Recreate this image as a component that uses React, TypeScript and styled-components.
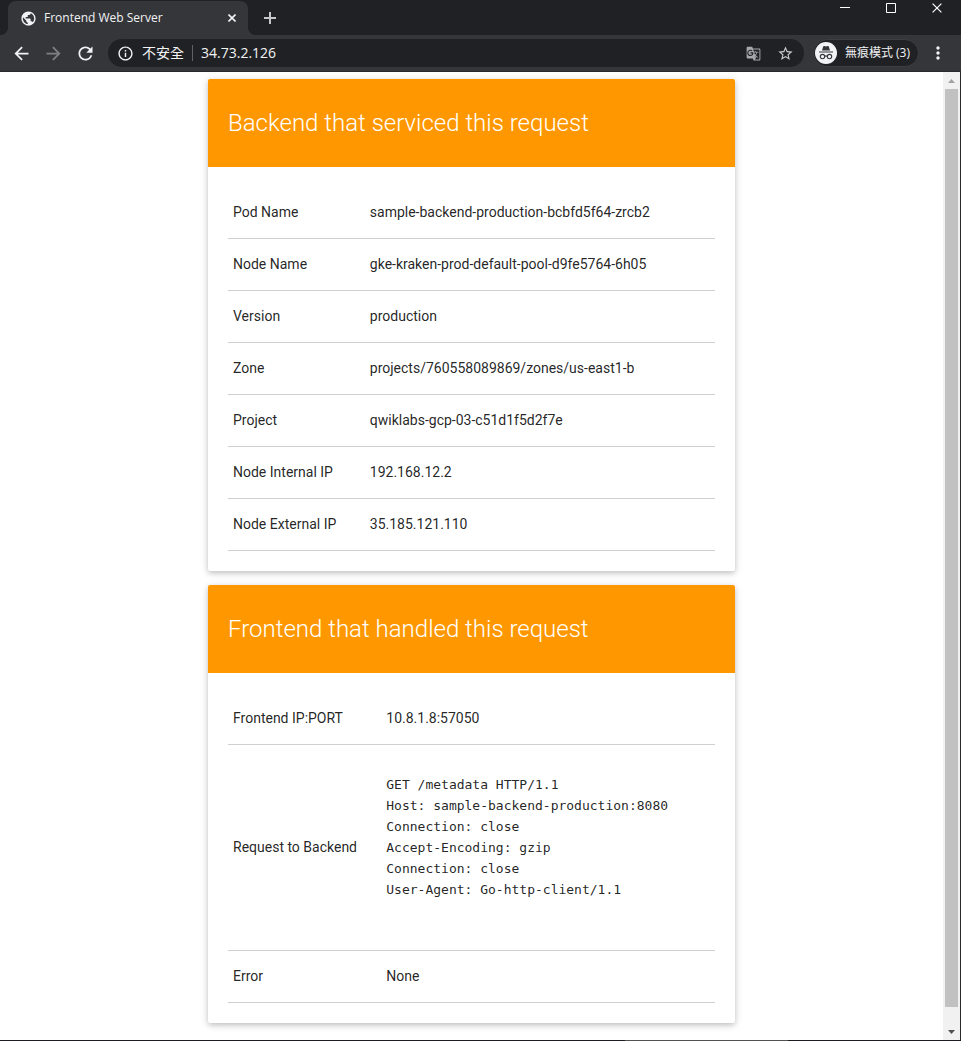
import React from "react";
import styled, { createGlobalStyle } from "styled-components";
import {
  MdArrowBack,
  MdArrowForward,
  MdGTranslate,
  MdInfoOutline,
  MdMoreVert,
  MdPublic,
  MdRefresh,
  MdStarBorder,
} from "react-icons/md";

const uiFont = `"Open Sans", "Noto Sans", "Noto Sans CJK TC", sans-serif`;

const GlobalStyle = createGlobalStyle`
  *, *::before, *::after { box-sizing: border-box; }
  body { margin: 0; background: #fff; }
  button, input { font: inherit; color: inherit; }
`;

const BrowserWindow = styled.div`
  display: flex;
  flex-direction: column;
  min-height: 100vh;
  font-family: ${uiFont};
`;

const TabStrip = styled.header`
  display: flex;
  height: 35px;
  padding-left: 8px;
  background: #202124;
  color: #f1f3f4;
`;

const Tab = styled.div`
  position: relative;
  display: flex;
  align-items: center;
  gap: 7px;
  width: 240px;
  margin-top: 1px;
  padding: 0 8px 0 12px;
  border-radius: 8px 8px 0 0;
  background: #35363a;
  font-size: 12px;
  line-height: 16px;

  &::before,
  &::after {
    content: "";
    position: absolute;
    bottom: 0;
    width: 8px;
    height: 8px;
  }
  &::before {
    left: -8px;
    background: radial-gradient(circle at 0 0, transparent 8px, #35363a 8px);
  }
  &::after {
    right: -8px;
    background: radial-gradient(circle at 100% 0, transparent 8px, #35363a 8px);
  }
`;

const TabTitle = styled.span`
  flex: 1;
  white-space: nowrap;
`;

const IconButton = styled.button<{ $size?: number; $dim?: boolean }>`
  display: grid;
  place-items: center;
  flex: none;
  width: ${(p) => p.$size ?? 32}px;
  height: ${(p) => p.$size ?? 32}px;
  padding: 0;
  border: 0;
  background: none;
  color: ${(p) => (p.$dim ? "#7f8083" : "#f1f3f4")};
`;

const NewTab = styled(IconButton)`
  margin: 2px 0 0 6px;
  color: #c5c7ca;
`;

const WindowControls = styled.div`
  display: flex;
  margin-left: auto;
  padding-right: 1px;
`;

const WindowButton = styled.button`
  display: grid;
  place-items: center;
  width: 46px;
  height: 15px;
  padding: 0;
  border: 0;
  background: none;
  color: #fff;
`;

const Toolbar = styled.nav`
  display: flex;
  align-items: center;
  height: 37px;
  padding: 0 7px 0 5px;
  border-bottom: 1px solid #28292c;
  background: #35363a;
  color: #f1f3f4;
`;

const AddressBar = styled.form`
  display: flex;
  flex: 1;
  align-items: center;
  min-width: 0;
  height: 28px;
  margin: 0 9px 0 7px;
  padding: 0 2px 0 9px;
  border-radius: 14px;
  background: #202124;
  font-size: 14px;
  line-height: 20px;
`;

const Security = styled.label`
  display: flex;
  align-items: center;
  gap: 8px;
  white-space: nowrap;

  &::after {
    content: "";
    width: 1px;
    height: 16px;
    background: #5f6368;
  }
`;

const AddressInput = styled.input`
  flex: 1;
  min-width: 0;
  padding: 0 0 0 8px;
  border: 0;
  outline: 0;
  background: none;
`;

const Profile = styled.button`
  display: flex;
  align-items: center;
  gap: 8px;
  height: 28px;
  margin-right: 3px;
  padding: 0 8px 0 1px;
  border: 1px solid #3d3e42;
  border-radius: 14px;
  background: #202124;
  font-size: 12px;
  line-height: 20px;
  white-space: nowrap;
`;

const Viewport = styled.div`
  display: flex;
  flex: 1;
  border-right: 1px solid #28292c;
`;

const Page = styled.main`
  flex: 1;
  min-width: 0;
  padding: 7px 16px 17px;
  color: rgba(0, 0, 0, 0.87);
  font-family: Roboto, sans-serif;
  font-size: 14px;
  line-height: 21px;
`;

const Card = styled.section`
  max-width: 527px;
  margin: 0 auto 14px;
  border-radius: 2px;
  background: #fff;
  box-shadow: 0 2px 5px 0 rgba(0, 0, 0, 0.16), 0 2px 10px 0 rgba(0, 0, 0, 0.12);

  &:last-child {
    margin-bottom: 0;
  }
`;

const CardTitle = styled.h1`
  margin: 0;
  padding: 20px;
  border-radius: 2px 2px 0 0;
  background: #ff9800;
  color: #fff;
  font-size: 24px;
  font-weight: 300;
  line-height: 48px;
`;

const CardBody = styled.div`
  padding: 20px;
`;

const DataTable = styled.table`
  width: 100%;
  border-collapse: collapse;
`;

const Row = styled.tr`
  border-bottom: 1px solid #d0d0d0;
`;

const Label = styled.th`
  padding: 15px 5px;
  font-weight: 400;
  text-align: left;
  white-space: nowrap;
`;

const Value = styled.td`
  padding: 15px 5px;
`;

const RequestText = styled.pre`
  margin: 14px 0;
  font-family: "DejaVu Sans Mono", monospace;
  font-size: 13px;
  line-height: 21px;
`;

const ScrollTrack = styled.div`
  display: flex;
  flex-direction: column;
  width: 17px;
  background: #f1f1f1;
`;

const ScrollArrow = styled.button<{ $enabled?: boolean }>`
  display: grid;
  place-items: center;
  width: 17px;
  height: 17px;
  padding: 0;
  border: 0;
  background: none;
  color: ${(p) => (p.$enabled ? "#505050" : "#a3a3a3")};
`;

const ScrollThumb = styled.div`
  flex: 1;
  margin: 0 2px 16px;
  background: #c1c1c1;
`;

const BottomEdge = styled.footer`
  height: 1px;
  background: linear-gradient(to right, #1b1f24 65%, #505254 65% 82%, #1b1f24 82%);
`;

function IncognitoBadge() {
  return (
    <svg width="22" height="22" viewBox="0 0 22 22" aria-hidden="true">
      <circle cx="11" cy="11" r="11" fill="#f1f3f4" />
      <path d="M7 8.6 8.1 4.7Q8.4 3.8 9.3 4.1L11 4.6 12.7 4.1Q13.6 3.8 13.9 4.7L15 8.6Z" fill="#35363a" />
      <path d="M4 9.5H18V10.5H4Z" fill="#35363a" />
      <g fill="none" stroke="#35363a" strokeWidth="1.1">
        <circle cx="7.5" cy="14.6" r="2.2" />
        <circle cx="14.5" cy="14.6" r="2.2" />
        <path d="M9.7 14.3Q11 13.5 12.3 14.3" />
      </g>
    </svg>
  );
}

function Cross({ size, width }: { size: number; width: number }) {
  return (
    <svg width={size} height={size} viewBox="0 0 10 10" aria-hidden="true">
      <path d="M.6.6 9.4 9.4M9.4.6.6 9.4" stroke="currentColor" strokeWidth={width} />
    </svg>
  );
}

const backendRows = [
  ["Pod Name", "sample-backend-production-bcbfd5f64-zrcb2"],
  ["Node Name", "gke-kraken-prod-default-pool-d9fe5764-6h05"],
  ["Version", "production"],
  ["Zone", "projects/760558089869/zones/us-east1-b"],
  ["Project", "qwiklabs-gcp-03-c51d1f5d2f7e"],
  ["Node Internal IP", "192.168.12.2"],
  ["Node External IP", "35.185.121.110"],
];

const requestText = `GET /metadata HTTP/1.1
Host: sample-backend-production:8080
Connection: close
Accept-Encoding: gzip
Connection: close
User-Agent: Go-http-client/1.1

`;

const frontendRows: [string, React.ReactNode][] = [
  ["Frontend IP:PORT", "10.8.1.8:57050"],
  ["Request to Backend", <RequestText key="request">{requestText}</RequestText>],
  ["Error", "None"],
];

function InfoCard({ title, rows }: { title: string; rows: React.ReactNode[][] }) {
  return (
    <Card>
      <CardTitle>{title}</CardTitle>
      <CardBody>
        <DataTable>
          <tbody>
            {rows.map(([label, value], i) => (
              <Row key={i}>
                <Label scope="row">{label}</Label>
                <Value>{value}</Value>
              </Row>
            ))}
          </tbody>
        </DataTable>
      </CardBody>
    </Card>
  );
}

export default function App() {
  return (
    <BrowserWindow>
      <GlobalStyle />
      <TabStrip>
        <Tab>
          <MdPublic size={17} />
          <TabTitle>Frontend Web Server</TabTitle>
          <IconButton $size={16} aria-label="Close tab">
            <Cross size={8} width={2} />
          </IconButton>
        </Tab>
        <NewTab aria-label="New tab">
          <svg width="12" height="12" viewBox="0 0 12 12" aria-hidden="true">
            <path d="M6 0V12M0 6H12" stroke="currentColor" strokeWidth="2" />
          </svg>
        </NewTab>
        <WindowControls>
          <WindowButton aria-label="Minimize">
            <svg width="10" height="10" viewBox="0 0 10 10" aria-hidden="true">
              <path d="M0 4.5H10" stroke="currentColor" />
            </svg>
          </WindowButton>
          <WindowButton aria-label="Maximize">
            <svg width="10" height="10" viewBox="0 0 10 10" aria-hidden="true">
              <path d="M.5.5H9.5V9.5H.5Z" fill="none" stroke="currentColor" />
            </svg>
          </WindowButton>
          <WindowButton aria-label="Close">
            <Cross size={10} width={1.2} />
          </WindowButton>
        </WindowControls>
      </TabStrip>
      <Toolbar>
        <IconButton aria-label="Back">
          <MdArrowBack size={21} />
        </IconButton>
        <IconButton $dim aria-label="Forward">
          <MdArrowForward size={21} />
        </IconButton>
        <IconButton aria-label="Reload">
          <MdRefresh size={21} />
        </IconButton>
        <AddressBar onSubmit={(e) => e.preventDefault()}>
          <Security htmlFor="address">
            <MdInfoOutline size={17} />
            不安全
          </Security>
          <AddressInput id="address" defaultValue="34.73.2.126" />
          <IconButton type="button" aria-label="Translate">
            <MdGTranslate size={15} color="#a6a8ab" />
          </IconButton>
          <IconButton type="button" aria-label="Bookmark">
            <MdStarBorder size={17} color="#c8cacd" />
          </IconButton>
        </AddressBar>
        <Profile>
          <IncognitoBadge />
          無痕模式 (3)
        </Profile>
        <IconButton aria-label="Menu">
          <MdMoreVert size={20} />
        </IconButton>
      </Toolbar>
      <Viewport>
        <Page>
          <InfoCard title="Backend that serviced this request" rows={backendRows} />
          <InfoCard title="Frontend that handled this request" rows={frontendRows} />
        </Page>
        <ScrollTrack>
          <ScrollArrow aria-label="Scroll up">
            <svg width="7" height="4" viewBox="0 0 7 4" aria-hidden="true">
              <path d="M0 4 3.5 0 7 4Z" fill="currentColor" />
            </svg>
          </ScrollArrow>
          <ScrollThumb />
          <ScrollArrow $enabled aria-label="Scroll down">
            <svg width="7" height="4" viewBox="0 0 7 4" aria-hidden="true">
              <path d="M0 0H7L3.5 4Z" fill="currentColor" />
            </svg>
          </ScrollArrow>
        </ScrollTrack>
      </Viewport>
      <BottomEdge />
    </BrowserWindow>
  );
}
